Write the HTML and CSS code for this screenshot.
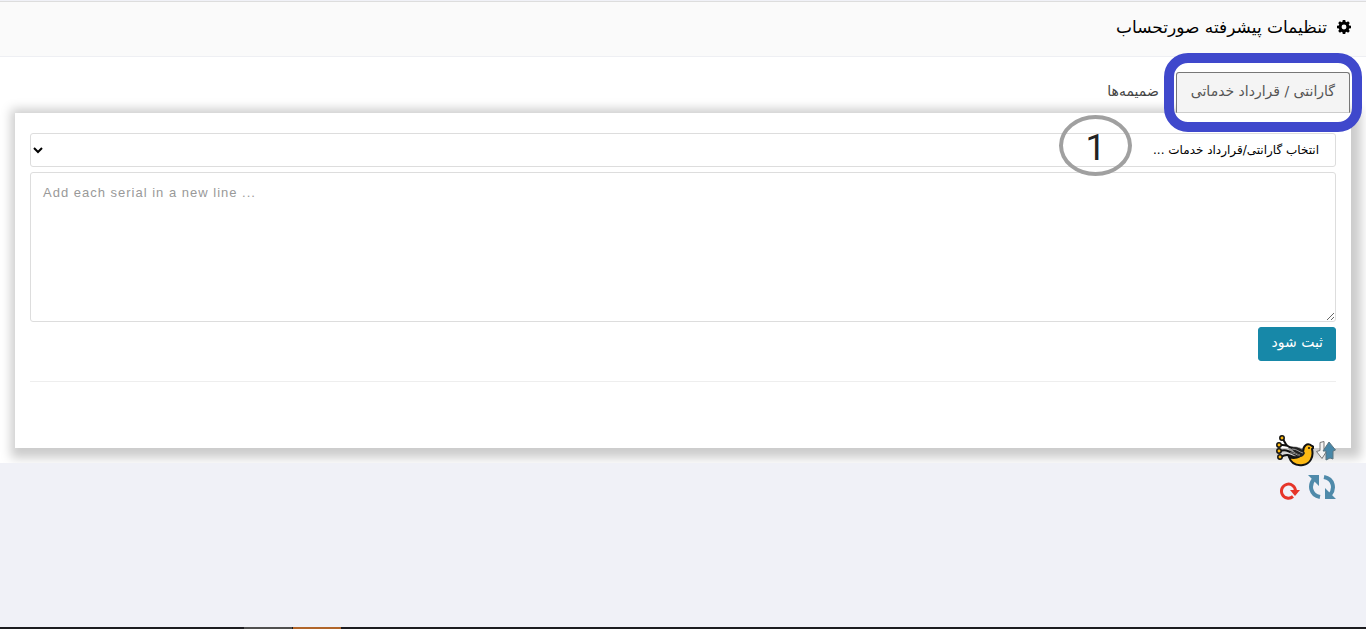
FILE: index.html
```html
<!DOCTYPE html>
<html lang="fa" dir="rtl">
<head>
  <meta charset="UTF-8" />
  <meta name="viewport" content="width=device-width, initial-scale=1.0" />
  <title>تنظیمات پیشرفته صورتحساب</title>
  <link rel="stylesheet" href="styles.css">
</head>
<body>
  <section class="panel">
    <header class="panel-header">
      <svg class="gear" viewBox="0 0 16 16" aria-hidden="true">
        <path fill-rule="evenodd" d="M6.600 0h2.800l.4 2.100 1.100.5L12.700 1.400l1.900 1.900-1.200 1.800.5 1.100 2.100.4v2.800l-2.100.4-.5 1.100 1.200 1.800-1.900 1.900-1.800-1.200-1.100.5L9.400 16H6.600l-.4-2.100-1.100-.5-1.800 1.200-1.900-1.900 1.200-1.800-.5-1.100L0 9.400V6.600l2.100-.4.5-1.100-1.200-1.800 1.900-1.900 1.800 1.200 1.100-.5zM8 5.200a2.800 2.800 0 1 0 0 5.600 2.800 2.800 0 0 0 0-5.600z"/>
      </svg>
      <h1>تنظیمات پیشرفته صورتحساب</h1>
    </header>

    <nav class="tabs">
      <a class="tab active" href="#warranty">گارانتی / قرارداد خدماتی<span class="highlight"></span></a>
      <a class="tab" href="#attachments">ضمیمه‌ها</a>
    </nav>

    <form class="card" id="warranty">
      <select class="field" aria-label="انتخاب گارانتی/قرارداد خدمات">
        <option>انتخاب گارانتی/قرارداد خدمات ...</option>
      </select>
      <textarea class="field serials" dir="ltr" aria-label="Serials" placeholder="Add each serial in a new line ..."></textarea>
      <button class="submit" type="button">ثبت شود</button>
      <hr>
      <span class="step">1</span>
    </form>
  </section>

  <div class="shortcuts">
    <div class="shortcut-row">
      <a href="#top" aria-label="Up and down">
        <svg width="20" height="22" viewBox="0 0 20 22">
          <path d="M4 2.500l4-1v8l3 1-5 8-5.500-7 3.500-1z" fill="#f4f4f4" stroke="#777"/>
          <path d="M13 2l6.500 8-2.500 1v8l-3-1-4 2v-9l-3 0z" fill="#4787a8" stroke="#5a7480"/>
        </svg>
      </a>
      <a href="#bird" aria-label="Bird">
        <svg width="38" height="34" viewBox="0 0 38 34">
          <path d="M12 14c5-3 12-1 17 2l-2 8-6-1c-4-1-6-4-9-9z" fill="#999"/>
          <g fill="none" stroke="#111" stroke-width="2">
            <path d="M7 5c3 5 3 8 10 9 6 0 10 3 13 8M5 11c9-1 11 5 23 9M4 17c9-3 11 4 22 5M5 23c8-5 11 1 19 2"/>
          </g>
          <path d="M13 23c5 2 11 1 14-5 0-6 4-10 9-6l2 1-2 2c2 8-2 15-9 16-7 1-12-2-14-8z" fill="#fdb913" stroke="#111" stroke-width="2"/>
          <path d="M15 14c6-1 12 1 14 5-2 5-6 5-12 3 4 0 5-1 5-2-3-1-5-3-7-6z" fill="#222"/>
          <path d="M16 15c5 0 7 3 11 4M14 19c4-1 7 3 10 2" fill="none" stroke="#999"/>
          <g fill="#fdb913" stroke="#111" stroke-width="1.500">
            <circle cx="6" cy="4" r="2.200"/><circle cx="3" cy="11" r="2.200"/><circle cx="3" cy="17" r="2.200"/><circle cx="4" cy="23" r="2.200"/>
          </g>
          <circle cx="33" cy="14" r="1" fill="#111"/>
        </svg>
      </a>
    </div>
    <div class="shortcut-row">
      <a href="#sync" aria-label="Sync">
        <svg width="28" height="26" viewBox="0 0 28 26">
          <g fill="none" stroke="#4f8aaa" stroke-width="4">
            <path d="M12 23C2 21 1 11 6 5M16 3c10 2 11 12 6 18"/>
          </g>
          <path d="M0 1h11v11zM28 25H17V14z" fill="#4f8aaa"/>
        </svg>
      </a>
      <a class="reload" href="#reload" aria-label="Reload">
        <svg width="20" height="18" viewBox="0 0 20 18">
          <path d="M13 14.500A7 7 0 1 1 15.500 9" fill="none" stroke="#e63529" stroke-width="3"/>
          <path d="M10 8h10l-5 6z" fill="#e63529"/>
        </svg>
      </a>
    </div>
  </div>

  <footer class="taskbar" dir="ltr"><i class="task"></i><i class="task current"></i></footer>
</body>
</html>
```
FILE: styles.css
```css
* {
  box-sizing: border-box;
}
body {
  position: relative;
  display: flex;
  flex-direction: column;
  min-height: 100vh;
  margin: 0;
  background: #f0f1f7;
  color: #000;
  font-family: "DejaVu Sans", sans-serif;
}
.panel {
  padding-bottom: 15px;
  border-top: 1px solid #ddd;
  margin-top: 1px;
  background: #fff;
  overflow: hidden;
}
.panel-header {
  display: flex;
  align-items: center;
  gap: 10px;
  height: 55px;
  padding: 0 15px 4px;
  border-bottom: 1px solid #eeeff3;
  background: #fafafa;
}
.panel-header h1 {
  margin: 0;
  font-size: 17px;
  font-weight: normal;
}
.gear {
  width: 14px;
  height: 14px;
}
.tabs {
  display: flex;
  padding: 15px 16px 0;
}
.tab {
  position: relative;
  height: 41px;
  padding: 0 14px;
  border: 1px solid transparent;
  border-bottom: 0;
  border-radius: 3px 3px 0 0;
  color: #444;
  font-size: 14px;
  line-height: 36px;
  text-decoration: none;
}
.tab.active {
  z-index: 1;
  background: #f4f4f4;
  border: 1px solid #777;
  border-bottom-color: #ccc;
  color: #555;
}
.tab + .tab {
  padding-right: 16px;
}
.highlight {
  position: absolute;
  inset: -20px -13px;
  border: 10px solid #3f48cc;
  border-radius: 24px;
}
.card {
  position: relative;
  display: flex;
  flex-direction: column;
  align-items: flex-start;
  gap: 5px;
  min-height: 335px;
  margin: 0 15px;
  padding: 20px 15px;
  background: #fff;
  box-shadow: 3px 3px 10px 7px #ccc;
}
.field {
  width: 100%;
  border: 1px solid #ddd;
  border-radius: 3px;
  background: #fff;
  color: #000;
}
select.field {
  height: 34px;
  padding: 0 12px 0 1px;
  font: 12px "DejaVu Sans", sans-serif;
}
.serials {
  display: block;
  height: 150px;
  padding: 12px;
  font: 13px "Liberation Sans", Arial, sans-serif;
  letter-spacing: 1px;
}
.serials::placeholder {
  color: #999;
}
.submit {
  height: 34px;
  padding: 0 12px 4px;
  border: 1px solid #1788a8;
  border-radius: 3px;
  background: #1788a8;
  color: #fff;
  font: 14px "DejaVu Sans", sans-serif;
}
hr {
  width: 100%;
  margin: 15px 0;
  border: 0;
  border-top: 1px solid #eee;
}
.step {
  position: absolute;
  top: 2px;
  right: 219px;
  width: 73px;
  height: 61px;
  border: 4px solid #a0a0a0;
  border-radius: 50%;
  color: #222;
  font: 36px/58px Roboto, sans-serif;
  text-align: center;
}
.shortcuts {
  position: absolute;
  top: 434px;
  right: 30px;
}
.shortcut-row {
  display: flex;
  align-items: center;
  gap: 2px;
  margin-bottom: 6px;
}
.shortcuts a {
  display: flex;
}
.shortcuts .reload {
  margin-right: 6px;
  padding-top: 8px;
}
.taskbar {
  display: flex;
  gap: 1px;
  height: 2px;
  margin-top: auto;
  padding-left: 244px;
  background: #1c1c20;
}
.task {
  width: 48px;
  background: #505050;
}
.task.current {
  background: #b0652a;
}
```
